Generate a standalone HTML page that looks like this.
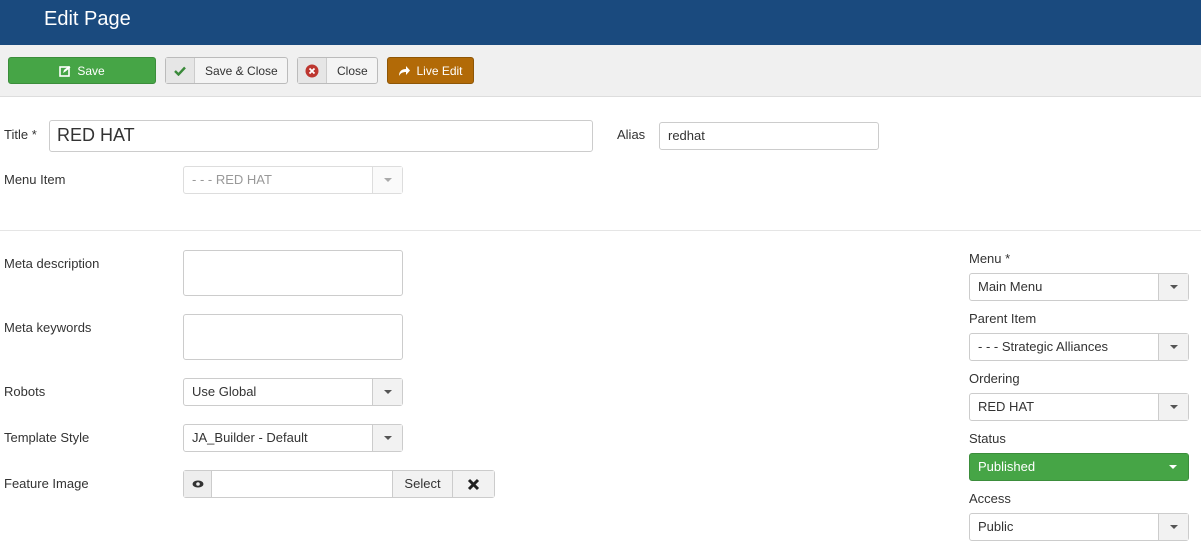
<!DOCTYPE html><html><head><style>
*{box-sizing:border-box}body{margin:0;width:1201px;height:550px;overflow:hidden;background:#fff;font-family:"Liberation Sans",sans-serif;font-size:13px;color:#333;position:relative}
.a{position:absolute}
.hdr{left:0;top:0;width:1201px;height:45px;background:#1a4a7e;color:#fff;font-size:20px;padding:8px 0 0 44px}
.tb{left:0;top:45px;width:1201px;height:52px;background:#f0f0f0;border-bottom:1px solid #ddd}
.btn{position:absolute;height:27px;border:1px solid #bbb;border-radius:3px;background:#f4f4f4;font-size:12px;display:flex;align-items:center}
.ic{width:29px;height:100%;border-right:1px solid #ccc;background:#e6e6e6;display:flex;align-items:center;justify-content:center}
.lbl{position:absolute;font-size:13px;color:#333}
.in{position:absolute;border:1px solid #ccc;border-radius:3px;background:#fff;padding-left:8px;padding-bottom:2px;display:flex;align-items:center;font-size:13px}
.sel{position:absolute;border:1px solid #ccc;border-radius:3px;background:#fff;font-size:13px;display:flex;align-items:center;padding-left:8px;padding-bottom:2px}
.sel .dd{position:absolute;right:0;top:0;width:30px;height:100%;border-left:1px solid #ccc;background:#f2f2f2;display:flex;align-items:center;justify-content:center}
.tri{width:0;height:0;border-left:4px solid transparent;border-right:4px solid transparent;border-top:4px solid #555}
</style></head><body>
<div class="a hdr">Edit Page</div>
<div class="a tb"></div>
<div class="btn" style="left:8px;top:57px;width:148px;background:#46a546;border-color:#3b8d3b;color:#fff;justify-content:center"><svg width="12" height="12" viewBox="0 0 12 12" style="margin-right:6px"><rect x="1" y="2" width="9" height="9" fill="none" stroke="#fff" stroke-width="1.6"/><path d="M4 8l1-3 5-4 1.5 1.5-5 4z" fill="#fff"/></svg>Save</div>
<div class="btn" style="left:165px;top:57px;width:123px"><div class="ic"><svg width="12" height="10"><path d="M1 5l3.5 3.5L11 1.5" stroke="#3a8a3a" stroke-width="2.4" fill="none"/></svg></div><span style="margin-left:10px">Save &amp; Close</span></div>
<div class="btn" style="left:297px;top:57px;width:81px"><div class="ic"><svg width="14" height="14"><circle cx="7" cy="7" r="6.5" fill="#bd362f"/><path d="M4.5 4.5l5 5M9.5 4.5l-5 5" stroke="#fff" stroke-width="1.8"/></svg></div><span style="margin-left:10px">Close</span></div>
<div class="btn" style="left:387px;top:57px;width:87px;background:#b26a07;border-color:#8e5606;color:#fff;justify-content:center"><svg width="12" height="11" style="margin-right:6px"><path d="M1 11C1 6 4 4 8 4V1l4 4.5L8 10V7C5 7 2.5 8 1 11z" fill="#fff"/></svg>Live Edit</div>
<div class="lbl" style="left:4px;top:127px">Title *</div>
<div class="in" style="left:49px;top:120px;width:544px;height:32px;font-size:18px;padding-left:7px">RED HAT</div>
<div class="lbl" style="left:617px;top:127px">Alias</div>
<div class="in" style="left:659px;top:122px;width:220px;height:28px">redhat</div>
<div class="lbl" style="left:4px;top:172px">Menu Item</div>
<div class="sel" style="left:183px;top:166px;width:220px;height:28px;color:#999;border-color:#ddd">- - - RED HAT<div class="dd" style="background:#fafafa;border-color:#ddd"><div class="tri" style="border-top-color:#aaa"></div></div></div>
<div class="a" style="left:0;top:230px;width:1201px;height:1px;background:#e5e5e5"></div>
<div class="lbl" style="left:4px;top:256px">Meta description</div>
<div class="in" style="left:183px;top:250px;width:220px;height:46px"></div>
<div class="lbl" style="left:4px;top:320px">Meta keywords</div>
<div class="in" style="left:183px;top:314px;width:220px;height:46px"></div>
<div class="lbl" style="left:4px;top:384px">Robots</div>
<div class="sel" style="left:183px;top:378px;width:220px;height:28px">Use Global<div class="dd"><div class="tri"></div></div></div>
<div class="lbl" style="left:4px;top:430px">Template Style</div>
<div class="sel" style="left:183px;top:424px;width:220px;height:28px">JA_Builder - Default<div class="dd"><div class="tri"></div></div></div>
<div class="lbl" style="left:4px;top:476px">Feature Image</div>
<div class="a" style="left:183px;top:470px;width:312px;height:28px;border:1px solid #ccc;border-radius:3px;display:flex;background:#fff">
<div style="width:28px;background:#eee;border-right:1px solid #ccc;display:flex;align-items:center;justify-content:center"><svg width="12" height="8"><ellipse cx="6" cy="4" rx="5.5" ry="3.5" fill="#333"/><circle cx="6" cy="4" r="1.8" fill="#eee"/></svg></div>
<div style="width:180px"></div>
<div style="width:61px;background:#f2f2f2;border-left:1px solid #ccc;border-right:1px solid #ccc;display:flex;align-items:center;justify-content:center;padding-bottom:2px">Select</div>
<div style="flex:1;background:#f2f2f2;display:flex;align-items:center;justify-content:center"><svg width="13" height="13"><path d="M2 2l9 9M11 2l-9 9" stroke="#222" stroke-width="3"/></svg></div></div>
<div class="lbl" style="left:969px;top:251px">Menu *</div>
<div class="sel" style="left:969px;top:273px;width:220px;height:28px">Main Menu<div class="dd"><div class="tri"></div></div></div>
<div class="lbl" style="left:969px;top:311px">Parent Item</div>
<div class="sel" style="left:969px;top:333px;width:220px;height:28px">- - - Strategic Alliances<div class="dd"><div class="tri"></div></div></div>
<div class="lbl" style="left:969px;top:371px">Ordering</div>
<div class="sel" style="left:969px;top:393px;width:220px;height:28px">RED HAT<div class="dd"><div class="tri"></div></div></div>
<div class="lbl" style="left:969px;top:431px">Status</div>
<div class="sel" style="left:969px;top:453px;width:220px;height:28px;background:#46a546;border-color:#3b8d3b;color:#fff">Published<div class="dd" style="background:#46a546;border:none"><div class="tri" style="border-top-color:#fff"></div></div></div>
<div class="lbl" style="left:969px;top:491px">Access</div>
<div class="sel" style="left:969px;top:513px;width:220px;height:28px">Public<div class="dd"><div class="tri"></div></div></div>
</body></html>
